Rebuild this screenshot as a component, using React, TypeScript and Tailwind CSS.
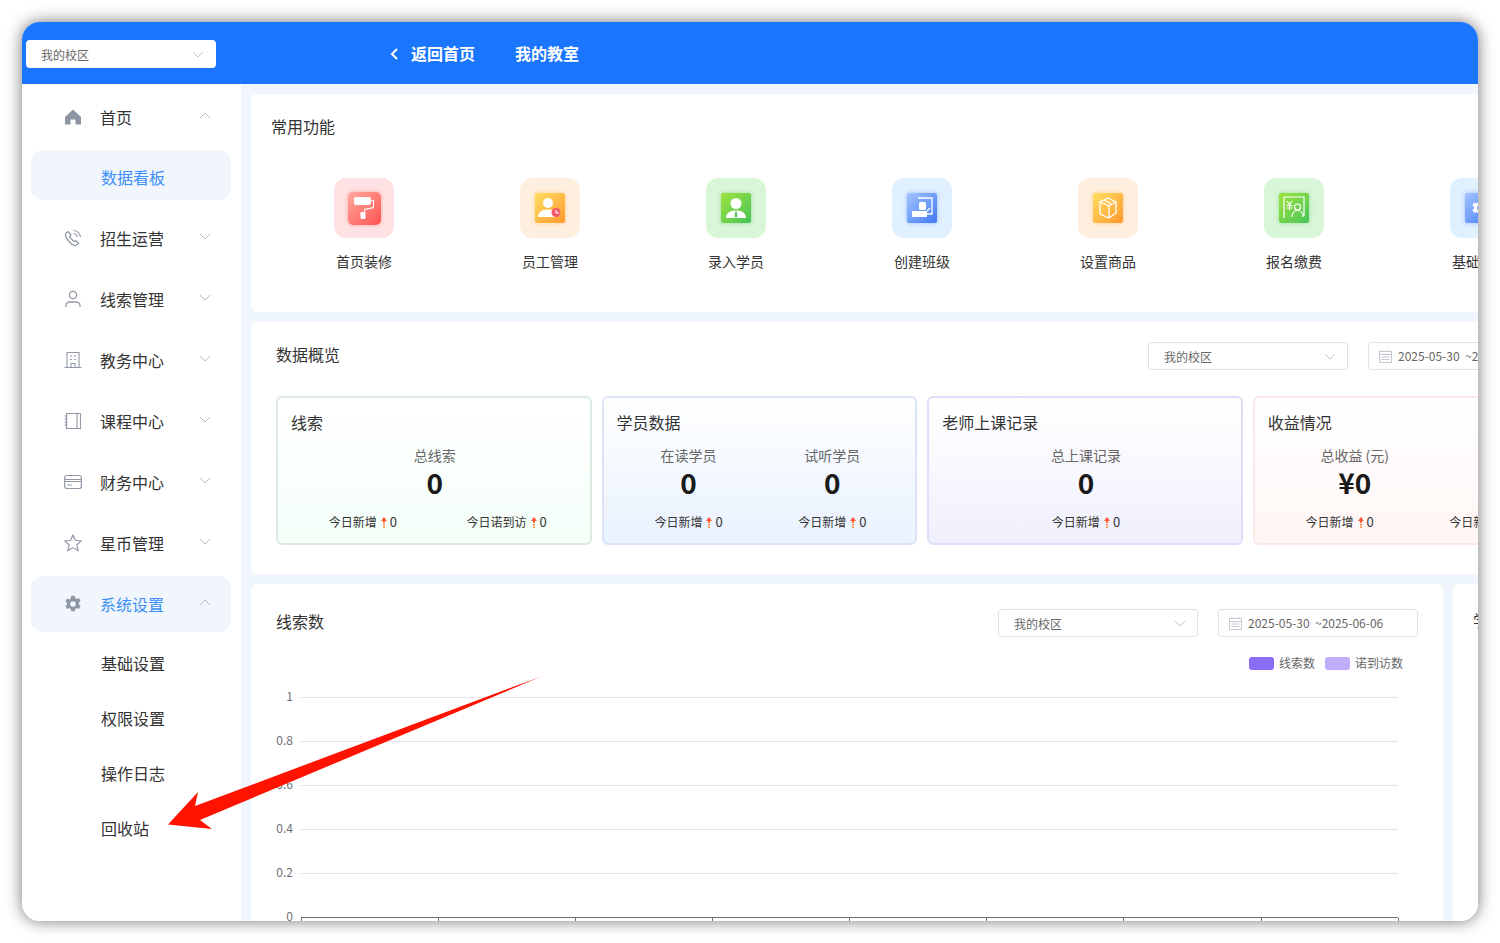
import React from 'react';

const fontStack = "font-['Noto_Sans_CJK_SC','Liberation_Sans',sans-serif]";

const Chevron = ({ up = false, className = '' }: { up?: boolean; className?: string }) => (
  <svg width="12" height="7" viewBox="0 0 12 7" fill="none" className={className}>
    <path d={up ? 'M1 6l5-5 5 5' : 'M1 1l5 5 5-5'} stroke="currentColor" strokeWidth="1" />
  </svg>
);

const HomeIcon = () => (
  <svg width="18" height="18" viewBox="0 0 18 18">
    <path d="M9 1.500L1 9v7.500h5.500v-5h5v5H17V9z" fill="#8f96a3" />
  </svg>
);
const PhoneIcon = () => (
  <svg width="18" height="18" viewBox="0 0 18 18" fill="none" stroke="#9298a5" strokeWidth="1.200">
    <path d="M1.500 4.500L4 2.500l3 3.500-1.500 1.700 4.500 5 1.800-1.200 2.700 3-2.500 2c-2 .3-4-.8-6-3S1 7 1.500 4.500z" />
    <path d="M9.500 1.500c3.500.3 6.500 3 7 6.500M9.500 4.500c2 .2 3.700 1.700 4 3.500" />
  </svg>
);
const UserIcon = () => (
  <svg width="18" height="18" viewBox="0 0 18 18" fill="none" stroke="#9298a5" strokeWidth="1.300">
    <circle cx="9" cy="5" r="3.600" />
    <path d="M2 17v-1.500c0-2 1.800-3.500 4-3.500h6c2.200 0 4 1.500 4 3.500V17" />
  </svg>
);
const BuildingIcon = () => (
  <svg width="18" height="18" viewBox="0 0 18 18" fill="none" stroke="#9298a5" strokeWidth="1.100">
    <path d="M3 16.500V1.500h12v15M0.500 16.500h17M7 16.500v-4h4v4M6 5h2M10 5h2M6 8.500h2M10 8.500h2" />
  </svg>
);
const BookIcon = () => (
  <svg width="18" height="18" viewBox="0 0 18 18" fill="none" stroke="#9298a5" strokeWidth="1.100">
    <path d="M2.500 1.500h14v15h-14zM13 1.500v15M0.500 4h3M0.500 7h3M0.500 10h3M0.500 13h3" />
  </svg>
);
const CardIcon = () => (
  <svg width="18" height="18" viewBox="0 0 18 18" fill="none" stroke="#9298a5" strokeWidth="1.200">
    <rect x="0.700" y="2.500" width="16.600" height="13" rx="2" />
    <path d="M0.700 6.500h16.600M0.700 8.500h16.600M3 12h5" />
  </svg>
);
const StarIcon = () => (
  <svg width="18" height="18" viewBox="0 0 18 18" fill="none" stroke="#9298a5" strokeWidth="1.200">
    <path d="M9 1l2.400 5.300 5.800.6-4.300 3.900 1.200 5.700L9 13.600l-5.100 2.900 1.200-5.700L.8 6.900l5.800-.6z" />
  </svg>
);
const GearIcon = () => (
  <svg width="18" height="18" viewBox="0 0 18 18">
    <path
      fillRule="evenodd"
      d="M7.300.8h3.400l.5 2.300 1.500.8 2.200-.8 1.700 3-1.700 1.500v1.800l1.700 1.500-1.700 3-2.200-.8-1.500.8-.5 2.300H7.300l-.5-2.300-1.500-.8-2.200.8-1.700-3 1.700-1.500V8.100L1.400 6.600l1.700-3 2.200.8 1.500-.8zM9 6.200a2.800 2.800 0 100 5.600 2.800 2.800 0 000-5.600z"
      fill="#8f96a3"
    />
  </svg>
);

const menuTop = [
  { label: '招生运营', icon: <PhoneIcon /> },
  { label: '线索管理', icon: <UserIcon /> },
  { label: '教务中心', icon: <BuildingIcon /> },
  { label: '课程中心', icon: <BookIcon /> },
  { label: '财务中心', icon: <CardIcon /> },
  { label: '星币管理', icon: <StarIcon /> },
];

const MenuRow = ({ label, icon, up, active }: { label: string; icon: React.ReactNode; up?: boolean; active?: boolean }) => (
  <div className={`flex h-[56px] items-center rounded-[12px] pl-[33px] pr-[20px] ${active ? 'bg-[#f1f6fc]' : ''}`}>
    <span className="flex w-[18px] justify-center">{icon}</span>
    <span className={`ml-[18px] text-[16px] ${active ? 'text-[#3d8ff7]' : 'text-[#333333]'}`}>{label}</span>
    <Chevron up={up} className="ml-auto mb-[4px] text-[#b7bcc5]" />
  </div>
);

const Sidebar = () => (
  <aside className="w-[219px] shrink-0 bg-white pl-[9px] pr-[10px] pt-[5px]">
    <MenuRow label="首页" icon={<HomeIcon />} up />
    <div className="mt-[5px] flex h-[50px] items-center rounded-[12px] bg-[#f1f6fc] pl-[70px] pt-[4px] text-[16px] text-[#3d8ff7]">数据看板</div>
    <div className="mt-[10px] flex flex-col gap-[5px]">
      {menuTop.map((m) => (
        <MenuRow key={m.label} label={m.label} icon={m.icon} />
      ))}
      <MenuRow label="系统设置" icon={<GearIcon />} up active />
    </div>
    <div className="mt-[3px] flex flex-col">
      {['基础设置', '权限设置', '操作日志', '回收站'].map((s) => (
        <div key={s} className="flex h-[55px] items-center pl-[70px] text-[16px] text-[#333333]">{s}</div>
      ))}
    </div>
  </aside>
);

const SelectBox = ({ className = '' }: { className?: string }) => (
  <div className={`flex h-[28px] w-[200px] items-center rounded-[3px] border border-[#dfe1e6] bg-white pl-[15px] pr-[11px] text-[12px] text-[#666666] ${className}`}>
    <span className="pt-[2px]">我的校区</span>
    <Chevron className="ml-auto text-[#c0c4cc]" />
  </div>
);

const CalendarIcon = () => (
  <svg width="13" height="13" viewBox="0 0 13 13" fill="none" stroke="#c5c8d0" strokeWidth="1">
    <rect x="0.500" y="1.500" width="12" height="11" />
    <path d="M0.500 4.500h12M3 0v2M10 0v2M2.500 7h8M2.500 9.500h8" />
  </svg>
);

const DateBox = () => (
  <div className="flex h-[28px] w-[200px] shrink-0 items-center rounded-[3px] border border-[#dfe1e6] bg-white pl-[10px] text-[12px] text-[#666666]">
    <CalendarIcon />
    <span className="ml-[6px] whitespace-nowrap">2025-05-30 &nbsp;~2025-06-06</span>
  </div>
);

type ToolTheme = { name: string; tile: string; inner: string; glyph: React.ReactNode };

const tools: ToolTheme[] = [
  {
    name: '首页装修',
    tile: 'bg-[#ffe3e4]',
    inner: 'from-[#ffa79f] to-[#ff4f4f] h-[33px] w-[33px] rounded-[5px] shadow-[0_0_4px_rgba(255,110,110,0.5)]',
    glyph: (
      <svg width="21" height="27" viewBox="0 0 21 27" fill="white">
        <rect x="0" y="2" width="17" height="8" rx="2" />
        <path d="M17 5h3v8l-9 2v3h-1v-4l9-2V6h-2z" />
        <rect x="6.500" y="17" width="5" height="7" rx="1" />
      </svg>
    ),
  },
  {
    name: '员工管理',
    tile: 'bg-[#ffefdf]',
    inner: 'from-[#ffdf60] to-[#ff982e] h-[30px] w-[30px] rounded-[2px] shadow-[0_0_4px_rgba(255,180,70,0.5)]',
    glyph: (
      <svg width="24" height="22" viewBox="0 0 24 22" fill="white">
        <circle cx="10" cy="6" r="5" />
        <path d="M0 20c0-5 4-7.500 10-7.500S18 15 18 20z" />
        <circle cx="18" cy="15.500" r="4.500" fill="#f4596a" />
        <path d="M18 13v3h3" stroke="white" fill="none" />
      </svg>
    ),
  },
  {
    name: '录入学员',
    tile: 'bg-[#d9f6d8]',
    inner: 'from-[#9be33c] to-[#44c457] h-[30px] w-[30px] rounded-[2px] shadow-[0_0_4px_rgba(90,200,80,0.5)]',
    glyph: (
      <svg width="20" height="22" viewBox="0 0 20 22" fill="white">
        <circle cx="10" cy="6.500" r="5.500" />
        <path d="M0 21c0-5 4-7.500 10-7.500S20 16 20 21z" />
        <path d="M9.300 14.500h1.400l.7 5-1.400 1-1.400-1z" fill="#4cc451" />
      </svg>
    ),
  },
  {
    name: '创建班级',
    tile: 'bg-[#e0f0ff]',
    inner: 'from-[#a5c4ff] to-[#3f78f2] h-[30px] w-[30px] rounded-[2px] shadow-[0_0_4px_rgba(90,140,250,0.5)]',
    glyph: (
      <svg width="22" height="22" viewBox="0 0 22 22" fill="none">
        <path d="M7 1h14v16h-6" stroke="white" strokeWidth="1.300" />
        <rect x="8" y="5" width="7" height="8" rx="1.500" fill="white" />
        <rect x="1" y="14" width="15" height="6" fill="white" />
        <path d="M16 14l3-3" stroke="white" strokeWidth="1.300" />
      </svg>
    ),
  },
  {
    name: '设置商品',
    tile: 'bg-[#ffefdf]',
    inner: 'from-[#ffdf60] to-[#ff982e] h-[30px] w-[30px] rounded-[2px] shadow-[0_0_4px_rgba(255,180,70,0.5)]',
    glyph: (
      <svg width="18" height="22" viewBox="0 0 18 22" fill="none" stroke="white" strokeWidth="1.300">
        <path d="M9 1l8 4v11l-7 5-9-4V5z" />
        <path d="M1 5l9 4v12M9.500 9L17 5M5 3l8 4" />
      </svg>
    ),
  },
  {
    name: '报名缴费',
    tile: 'bg-[#d9f6d8]',
    inner: 'from-[#9be33c] to-[#44c457] h-[30px] w-[30px] rounded-[2px] shadow-[0_0_4px_rgba(90,200,80,0.5)]',
    glyph: (
      <svg width="22" height="24" viewBox="0 0 22 24" fill="none" stroke="white" strokeWidth="1.200">
        <path d="M1 22V1h20v19" />
        <path d="M4 5l2.500 3.500L9 5M6.500 8.500V14M3.500 9.500h6M3.500 12h6" />
        <circle cx="14.500" cy="11" r="3" />
        <path d="M9 21c0-4 2.500-6.500 5.500-6.500S20 17 20 21" />
      </svg>
    ),
  },
  {
    name: '基础设置',
    tile: 'bg-[#e0f0ff]',
    inner: 'from-[#a5c4ff] to-[#3f78f2] h-[30px] w-[30px] rounded-[2px] shadow-[0_0_4px_rgba(90,140,250,0.5)]',
    glyph: (
      <svg width="18" height="18" viewBox="0 0 18 18">
        <path
          fillRule="evenodd"
          d="M7.300.8h3.400l.5 2.300 1.500.8 2.200-.8 1.700 3-1.700 1.500v1.800l1.700 1.500-1.700 3-2.200-.8-1.500.8-.5 2.300H7.300l-.5-2.300-1.500-.8-2.200.8-1.700-3 1.700-1.500V8.100L1.400 6.600l1.700-3 2.200.8 1.500-.8zM9 6a3 3 0 100 6 3 3 0 000-6z"
          fill="white"
        />
      </svg>
    ),
  },
];

const ToolTile = ({ tool }: { tool: ToolTheme }) => (
  <div className="flex w-[186px] shrink-0 flex-col items-center">
    <div className={`flex h-[60px] w-[60px] items-center justify-center rounded-[12px] ${tool.tile}`}>
      <div className={`flex items-center justify-center bg-linear-to-br ${tool.inner}`}>{tool.glyph}</div>
    </div>
    <div className="mt-[13px] text-[14px] leading-[20px] text-[#333333]">{tool.name}</div>
  </div>
);

const UpArrow = () => (
  <svg width="6" height="11" viewBox="0 0 6 11" className="ml-[4px] mr-[3px]">
    <defs>
      <linearGradient id="upg" x1="0" y1="0" x2="0" y2="1">
        <stop offset="0" stopColor="#ff3b30" />
        <stop offset="1" stopColor="#ffa040" />
      </linearGradient>
    </defs>
    <path d="M3 0l3 4H4v2H2V4H0zM2 7h2v1.500H2zM2 9.500h2V11H2z" fill="url(#upg)" />
  </svg>
);

const Today = ({ label }: { label: string }) => (
  <div className="flex items-center justify-center whitespace-nowrap text-[12px] leading-[20px] text-[#333333]">
    {label}
    <UpArrow />
    <span className="text-[13px]">0</span>
  </div>
);

const StatCard = ({
  title,
  theme,
  tops,
  bottoms,
  wideTops,
}: {
  title: string;
  theme: string;
  tops: { label: string; value: string }[];
  bottoms: string[];
  wideTops?: boolean;
}) => (
  <div className={`h-[149px] w-[315.6px] shrink-0 rounded-[6px] border-2 bg-linear-to-b pl-[13px] pr-[11px] pt-[12px] ${theme}`}>
    <div className="text-[16px] leading-[24px] text-[#333333]">{title}</div>
    <div className={`mt-[11px] grid ${tops.length > 1 ? 'grid-cols-2' : 'grid-cols-1'} ${wideTops ? 'w-[348px]' : ''}`}>
      {tops.map((t) => (
        <div key={t.label} className="flex flex-col items-center">
          <div className="whitespace-nowrap text-[14px] leading-[20px] text-[#666666]">{t.label}</div>
          <div className="h-[36px] text-[28px] font-bold leading-[34px] text-[#1a1a1a]">{t.value}</div>
        </div>
      ))}
    </div>
    <div className={`mt-[11px] grid ${bottoms.length > 1 ? 'grid-cols-2' : 'grid-cols-1'}`}>
      {bottoms.map((b, i) => (
        <Today key={i} label={b} />
      ))}
    </div>
  </div>
);

const yTicks = [
  { y: 17, t: '1' },
  { y: 61, t: '0.8' },
  { y: 105, t: '0.6' },
  { y: 149, t: '0.4' },
  { y: 193, t: '0.2' },
  { y: 237, t: '0' },
];
const xTicks = [50, 187, 324, 461, 598, 735, 872, 1010, 1147];

const Chart = () => (
  <svg width="1192" height="250" viewBox="0 0 1192 250" className="block">
    {yTicks.map((t) => (
      <g key={t.t}>
        {t.t !== '0' && <line x1="50" x2="1147" y1={t.y + 0.5} y2={t.y + 0.5} stroke="#e0e3ea" />}
        <text x="42" y={t.y + 3.5} textAnchor="end" fontSize="12" fill="#6e7079">{t.t}</text>
      </g>
    ))}
    <line x1="50" x2="1147" y1="237.500" y2="237.500" stroke="#6e7079" />
    {xTicks.map((x) => (
      <line key={x} x1={x + 0.5} x2={x + 0.5} y1="238" y2="243" stroke="#6e7079" />
    ))}
  </svg>
);

const App = () => (
  <div className={`relative h-[943px] w-[1500px] overflow-hidden bg-white p-[22px] ${fontStack}`}>
    <div className="flex h-[899px] w-[1456px] flex-col overflow-hidden rounded-[18px] shadow-[0_0_16px_rgba(0,0,0,0.55)]">
      <header className="flex h-[62px] shrink-0 items-center bg-[#1a76ff] pl-[4px] text-white">
        <div className="mt-[2px] flex h-[28px] w-[190px] items-center rounded-[4px] bg-white pl-[15px] pr-[12px] text-[12px] text-[#666666]">
          <span className="pt-[2px]">我的校区</span>
          <Chevron className="ml-auto text-[#c0c4cc]" />
        </div>
        <svg width="10" height="14" viewBox="0 0 10 14" fill="none" className="ml-[173px] mt-[2px]">
          <path d="M8 2L3 7l5 5" stroke="white" strokeWidth="2" />
        </svg>
        <span className="ml-[12px] text-[16px] font-bold">返回首页</span>
        <span className="ml-[40px] text-[16px] font-bold">我的教室</span>
      </header>
      <div className="flex min-h-0 flex-1">
        <Sidebar />
        <main className="min-w-0 flex-1 overflow-hidden bg-[#f0f6fe] pl-[10px] pt-[10px]">
          <div className="flex w-[1500px] flex-col gap-[10px]">
            <section className="h-[218px] rounded-[6px] bg-white pl-[20px] pt-[20px]">
              <div className="text-[16px] leading-[24px] text-[#333333]">常用功能</div>
              <div className="mt-[40px] flex">
                {tools.map((t) => (
                  <ToolTile key={t.name} tool={t} />
                ))}
              </div>
            </section>
            <section className="h-[252px] rounded-[6px] bg-white pl-[25px] pt-[20px]">
              <div className="flex h-[28px] w-[1292px] items-center">
                <div className="pb-[4px] text-[16px] text-[#333333]">数据概览</div>
                <SelectBox className="ml-auto" />
                <div className="ml-[20px]"><DateBox /></div>
              </div>
              <div className="mt-[26px] flex gap-[10px]">
                <StatCard
                  title="线索"
                  theme="border-[#dcebe2] from-white to-[#f4fff8]"
                  tops={[{ label: '总线索', value: '0' }]}
                  bottoms={['今日新增', '今日诺到访']}
                />
                <StatCard
                  title="学员数据"
                  theme="border-[#dbe3f6] from-white to-[#e9f2ff]"
                  tops={[{ label: '在读学员', value: '0' }, { label: '试听学员', value: '0' }]}
                  bottoms={['今日新增', '今日新增']}
                />
                <StatCard
                  title="老师上课记录"
                  theme="border-[#dedefa] from-white to-[#f0f0fd]"
                  tops={[{ label: '总上课记录', value: '0' }]}
                  bottoms={['今日新增']}
                />
                <StatCard
                  title="收益情况"
                  theme="border-[#fde6e6] from-white to-[#fff6f5]"
                  tops={[{ label: '总收益 (元)', value: '¥0' }, { label: '总退款金额 (元)', value: '¥0' }]}
                  bottoms={['今日新增', '今日新增']}
                  wideTops
                />
              </div>
            </section>
            <div className="flex gap-[10px]">
              <section className="h-[400px] w-[1192px] shrink-0 rounded-[6px] bg-white pt-[25px]">
                <div className="flex h-[28px] items-center pl-[25px] pr-[25px]">
                  <div className="pb-[4px] text-[16px] text-[#333333]">线索数</div>
                  <SelectBox className="ml-auto" />
                  <div className="ml-[20px]"><DateBox /></div>
                </div>
                <div className="mt-[16px] flex h-[20px] items-center justify-end pr-[40px] text-[12px] text-[#666666]">
                  <span className="h-[13px] w-[25px] rounded-[3px] bg-[#8b6cf6]" />
                  <span className="ml-[5px]">线索数</span>
                  <span className="ml-[10px] h-[13px] w-[25px] rounded-[3px] bg-[#c0aefb]" />
                  <span className="ml-[5px]">诺到访数</span>
                </div>
                <div className="mt-[7px]">
                  <Chart />
                </div>
              </section>
              <section className="h-[400px] flex-1 rounded-[6px] bg-white pl-[20px] pt-[24px]">
                <div className="text-[16px] leading-[24px] text-[#333333]">学员数</div>
              </section>
            </div>
          </div>
        </main>
      </div>
    </div>
    <svg width="1500" height="943" viewBox="0 0 1500 943" className="pointer-events-none absolute left-0 top-0">
      <defs>
        <linearGradient id="arrowTail" x1="168" y1="824" x2="545" y2="675" gradientUnits="userSpaceOnUse">
          <stop offset="0.93" stopColor="#ff1200" />
          <stop offset="1" stopColor="#ffb0a8" />
        </linearGradient>
      </defs>
      <polygon points="168,824.500 198,792 195,806 545,675 200,820 212,829" fill="url(#arrowTail)" />
    </svg>
  </div>
);

export default App;
